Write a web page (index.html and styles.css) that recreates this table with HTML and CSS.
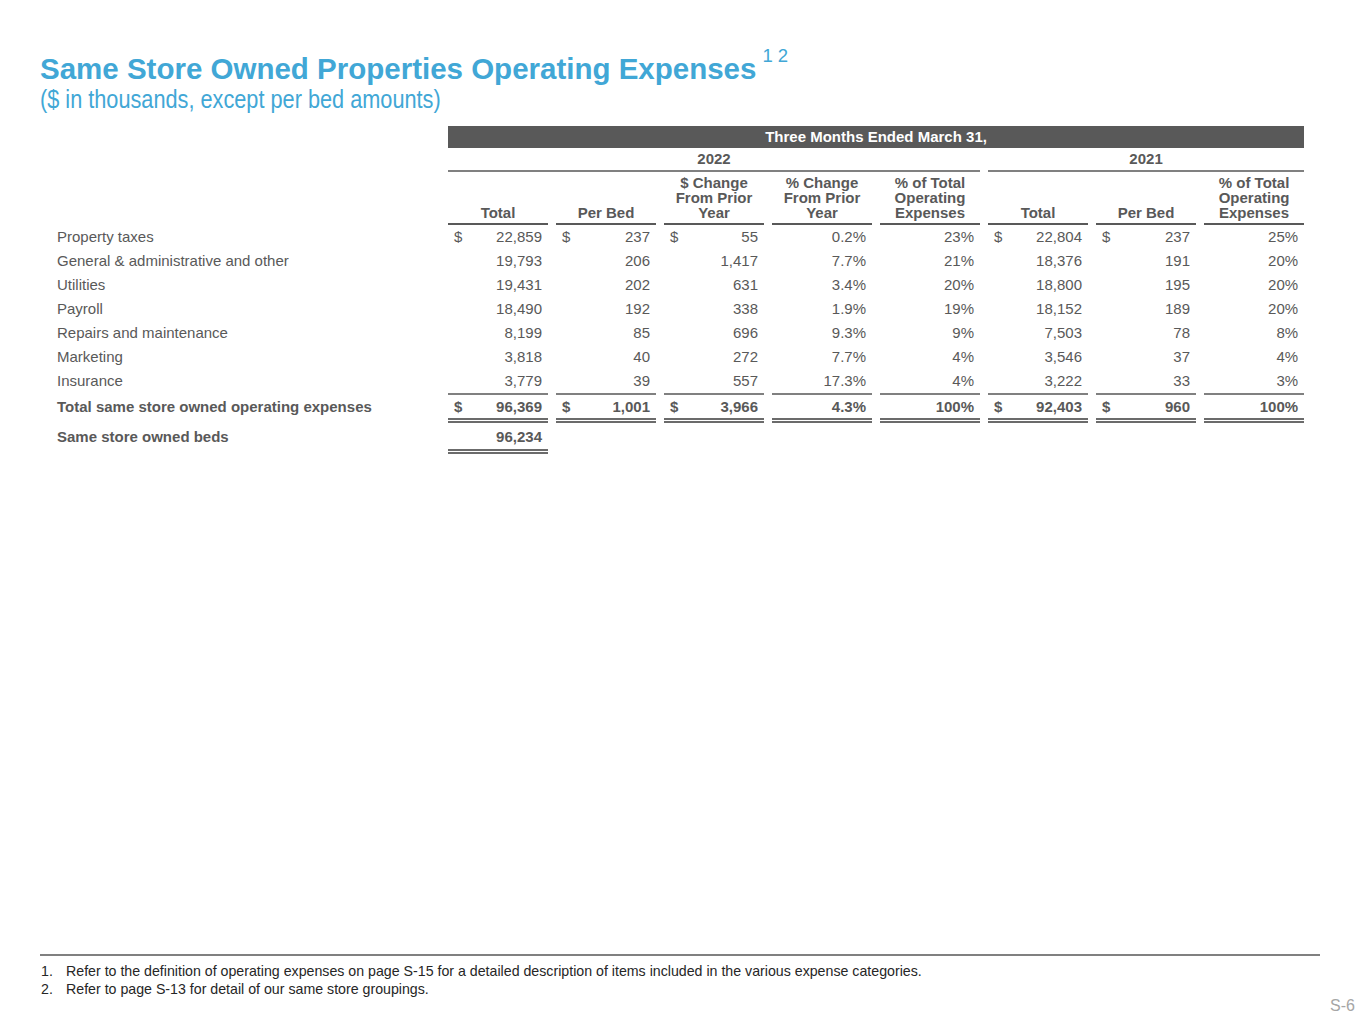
FILE: index.html
```html
<!DOCTYPE html>
<html lang="en">
<head>
<meta charset="utf-8">
<title>Same Store Owned Properties Operating Expenses</title>
<link rel="stylesheet" href="styles.css">
</head>
<body>
<div class="page">
  <header class="head">
    <h1 class="title">Same Store Owned Properties Operating Expenses<sup class="notes">1 2</sup></h1>
    <div class="subtitle"><span>($ in thousands, except per bed amounts)</span></div>
  </header>

  <table class="fin">
    <colgroup><col class="c-label"><col class="c-num" span="8"></colgroup>
    <thead>
      <tr class="r-period"><th></th><th colspan="8" class="bar">Three Months Ended March 31,</th></tr>
      <tr class="r-year"><th></th><th colspan="5" class="year">2022</th><th colspan="3" class="year">2021</th></tr>
      <tr class="r-cols">
        <th class="blank"></th>
        <th>Total</th><th>Per Bed</th><th>$ Change<br>From Prior<br>Year</th><th>% Change<br>From Prior<br>Year</th><th>% of Total<br>Operating<br>Expenses</th>
        <th>Total</th><th>Per Bed</th><th>% of Total<br>Operating<br>Expenses</th>
      </tr>
    </thead>
    <tbody>
      <tr class="r-first">
        <td class="lbl">Property taxes</td>
        <td class="num"><span class="cur">$</span>22,859</td><td class="num"><span class="cur">$</span>237</td><td class="num"><span class="cur">$</span>55</td><td class="num">0.2%</td><td class="num">23%</td>
        <td class="num"><span class="cur">$</span>22,804</td><td class="num"><span class="cur">$</span>237</td><td class="num">25%</td>
      </tr>
      <tr>
        <td class="lbl">General &amp; administrative and other</td>
        <td class="num">19,793</td><td class="num">206</td><td class="num">1,417</td><td class="num">7.7%</td><td class="num">21%</td>
        <td class="num">18,376</td><td class="num">191</td><td class="num">20%</td>
      </tr>
      <tr>
        <td class="lbl">Utilities</td>
        <td class="num">19,431</td><td class="num">202</td><td class="num">631</td><td class="num">3.4%</td><td class="num">20%</td>
        <td class="num">18,800</td><td class="num">195</td><td class="num">20%</td>
      </tr>
      <tr>
        <td class="lbl">Payroll</td>
        <td class="num">18,490</td><td class="num">192</td><td class="num">338</td><td class="num">1.9%</td><td class="num">19%</td>
        <td class="num">18,152</td><td class="num">189</td><td class="num">20%</td>
      </tr>
      <tr>
        <td class="lbl">Repairs and maintenance</td>
        <td class="num">8,199</td><td class="num">85</td><td class="num">696</td><td class="num">9.3%</td><td class="num">9%</td>
        <td class="num">7,503</td><td class="num">78</td><td class="num">8%</td>
      </tr>
      <tr>
        <td class="lbl">Marketing</td>
        <td class="num">3,818</td><td class="num">40</td><td class="num">272</td><td class="num">7.7%</td><td class="num">4%</td>
        <td class="num">3,546</td><td class="num">37</td><td class="num">4%</td>
      </tr>
      <tr class="r-last">
        <td class="lbl">Insurance</td>
        <td class="num">3,779</td><td class="num">39</td><td class="num">557</td><td class="num">17.3%</td><td class="num">4%</td>
        <td class="num">3,222</td><td class="num">33</td><td class="num">3%</td>
      </tr>
      <tr class="r-total">
        <td class="lbl">Total same store owned operating expenses</td>
        <td class="num"><span class="cur">$</span>96,369</td><td class="num"><span class="cur">$</span>1,001</td><td class="num"><span class="cur">$</span>3,966</td><td class="num">4.3%</td><td class="num">100%</td>
        <td class="num"><span class="cur">$</span>92,403</td><td class="num"><span class="cur">$</span>960</td><td class="num">100%</td>
      </tr>
      <tr class="r-beds">
        <td class="lbl">Same store owned beds</td>
        <td class="num dbl">96,234</td><td></td><td></td><td></td><td></td><td></td><td></td><td></td>
      </tr>
    </tbody>
  </table>

  <footer class="foot">
    <div class="rule"></div>
    <ol class="notes-list">
      <li><span class="n">1.</span><span>Refer to the definition of operating expenses on page S-15 for a detailed description of items included in the various expense categories.</span></li>
      <li><span class="n">2.</span><span>Refer to page S-13 for detail of our same store groupings.</span></li>
    </ol>
    <div class="pageno">S-6</div>
  </footer>
</div>
</body>
</html>
```

FILE: styles.css
```css
html, body {
  margin: 0;
  padding: 0;
  background: #ffffff;
}

body {
  font-family: "Liberation Sans", Arial, sans-serif;
  color: #595959;
}

.page {
  height: 1024px;
  display: flex;
  flex-direction: column;
  box-sizing: border-box;
  padding-top: 52px;
}

.title {
  margin: 0 0 0 40px;
  font-size: 29.5px;
  line-height: 34px;
  font-weight: bold;
  color: #41a7d6;
  white-space: nowrap;
}

.notes {
  font-size: 18.5px;
  font-weight: normal;
  line-height: 0;
  vertical-align: 17px;
  margin-left: 6px;
}

.subtitle {
  margin-left: 40px;
  font-size: 26px;
  line-height: 26px;
  color: #41a7d6;
}

.subtitle span {
  display: inline-block;
  transform: scaleX(0.835);
  transform-origin: left center;
  white-space: nowrap;
}

/* table */
.fin {
  margin: 14px 0 0 32px;
  border-collapse: separate;
  border-spacing: 8px 0;
  table-layout: fixed;
  width: 1272px;
  font-size: 15px;
}

.c-label { width: 400px; }
.c-num { width: 100px; }

.fin th,
.fin td {
  padding: 0;
  vertical-align: top;
}

.bar {
  background: #595959;
  color: #ffffff;
  font-weight: bold;
  text-align: center;
  line-height: 22px;
}

.year {
  font-weight: bold;
  text-align: center;
  line-height: 22px;
  border-bottom: 2px solid #808080;
}

.r-cols th {
  font-weight: bold;
  text-align: center;
  vertical-align: bottom;
  line-height: 15px;
  padding: 3px 0 3px;
  border-bottom: 2px solid #595959;
}

.r-cols th.blank {
  border-bottom: none;
}

.lbl {
  padding-left: 17px !important;
  line-height: 24px;
  white-space: nowrap;
}

.num {
  line-height: 24px;
  text-align: right;
  padding: 0 6px !important;
  white-space: nowrap;
}

.cur {
  float: left;
}

.r-last .lbl,
.r-last .num {
  line-height: 24px;
}

.r-last .num {
  border-bottom: 2px solid #808080;
}

.r-total td {
  font-weight: bold;
  line-height: 23px;
}

.r-total .num {
  border-bottom: 5px double #6b6b6b;
}

.r-beds td {
  font-weight: bold;
  line-height: 24px;
  padding-top: 2px !important;
}

.r-beds .dbl {
  border-bottom: 5px double #6b6b6b;
}

/* footer */
.foot {
  margin-top: auto;
  padding-bottom: 10px;
}

.rule {
  margin: 0 45px 0 40px;
  border-top: 2px solid #808080;
}

.notes-list {
  list-style: none;
  margin: 6px 0 0 41px;
  padding: 0;
  font-size: 14.2px;
  line-height: 18px;
  color: #262626;
}

.notes-list li {
  display: grid;
  grid-template-columns: 25px auto;
}

.pageno {
  text-align: right;
  padding-right: 10px;
  font-size: 16px;
  line-height: 16px;
  color: #a6a6a6;
}
```
